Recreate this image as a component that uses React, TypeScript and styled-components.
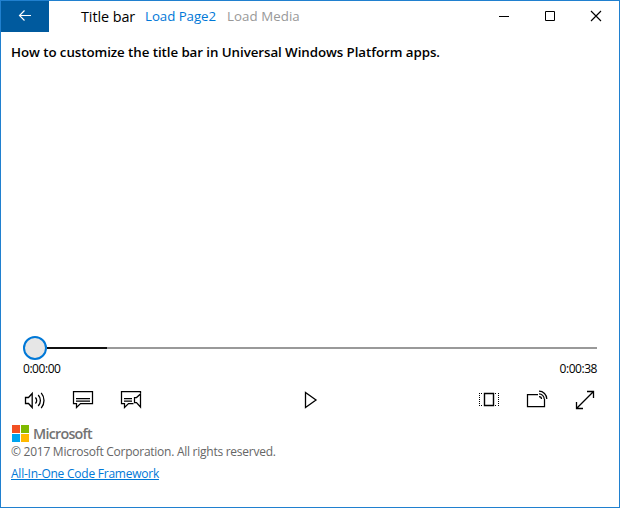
import React from "react";
import styled, { createGlobalStyle } from "styled-components";

const GlobalStyle = createGlobalStyle`
  * { box-sizing: border-box; }
  body { margin: 0; background: #fff; }
`;

const Window = styled.div`
  width: 620px;
  height: 508px;
  display: flex;
  flex-direction: column;
  border: 1px solid #2080cf;
  background: #fff;
  color: #000;
  font-family: "Open Sans", "Noto Sans", sans-serif;
  overflow: hidden;
`;

const TitleBar = styled.header`
  display: flex;
  height: 31px;
  flex: none;
`;

const BackButton = styled.button`
  width: 48px;
  height: 31px;
  padding: 0;
  border: 0;
  background: #005a9e;
`;

const TitleItems = styled.div`
  display: flex;
  flex: 1;
  padding-left: 32px;
`;

const Label = styled.span<{ $size: number; $width?: number; $color?: string; $spacing?: number }>`
  display: block;
  width: ${(p) => (p.$width ? `${p.$width}px` : "auto")};
  font-size: ${(p) => p.$size}px;
  color: ${(p) => p.$color ?? "#000"};
  letter-spacing: ${(p) => p.$spacing ?? 0}px;
  line-height: 31px;
  white-space: nowrap;
`;

const CaptionButton = styled.button`
  width: 46px;
  height: 31px;
  padding: 0;
  border: 0;
  background: transparent;
`;

const Icon = styled.svg<{ $color?: string; $weight?: number }>`
  display: block;
  margin: 0 auto;
  fill: none;
  stroke: ${(p) => p.$color ?? "#000"};
  stroke-width: ${(p) => p.$weight ?? 1};
`;

const Heading = styled.h1`
  margin: 10px 0 0 10px;
  font-size: 13.33px;
  line-height: 20px;
  font-weight: 600;
  letter-spacing: -0.07px;
  white-space: nowrap;
`;

const Stage = styled.main`
  flex: none;
  height: 274px;
`;

const Controls = styled.section`
  display: flex;
  flex-direction: column;
  height: 82px;
  padding: 0 22px;
`;

const Slider = styled.div`
  display: flex;
  align-items: center;
  height: 24px;
`;

const Thumb = styled.div`
  width: 24px;
  height: 24px;
  border: 2px solid #0078d7;
  border-radius: 50%;
  background: #e6e6e6;
`;

const Buffered = styled.div`
  width: 60px;
  height: 2px;
  background: #111;
`;

const Track = styled.div`
  flex: 1;
  height: 2px;
  background: #999;
`;

const Times = styled.div`
  display: flex;
  justify-content: space-between;
  height: 18px;
  font-size: 12px;
  line-height: 18px;
  letter-spacing: -0.45px;
`;

const Transport = styled.div`
  display: grid;
  grid-template-columns: 24px 24px 24px 1fr 24px 24px 24px;
  column-gap: 24px;
  height: 24px;
  margin-top: 10px;
`;

const IconButton = styled.button`
  width: 24px;
  height: 24px;
  padding: 0;
  border: 0;
  background: transparent;
  justify-self: center;
`;

const Footer = styled.footer`
  display: flex;
  flex-direction: column;
  align-items: flex-start;
  padding: 6px 0 0 10px;
`;

const Brand = styled.div`
  display: flex;
  height: 19px;
  padding-left: 1px;
  align-items: center;
  gap: 4px;
`;

const Logo = styled.svg`
  display: block;
`;

const Wordmark = styled.span`
  font-size: 14.3px;
  font-weight: 600;
  line-height: 19px;
  letter-spacing: -0.75px;
  color: #737373;
`;

const Copyright = styled.p`
  margin: 0;
  font-size: 12px;
  line-height: 17px;
  letter-spacing: -0.26px;
  color: #666;
  white-space: nowrap;
`;

const Link = styled.a`
  margin-top: 6px;
  font-size: 12px;
  line-height: 16px;
  letter-spacing: -0.24px;
  color: #0078d7;
  text-decoration: underline;
  text-underline-offset: 1px;
`;

export default function App() {
  return (
    <Window>
      <GlobalStyle />
      <TitleBar>
        <BackButton aria-label="Back">
          <Icon width="48" height="31" $color="#fff" $weight={1.15}>
            <path d="M30 14.5H18.5M23.5 9.5l-5 5 5 5" />
          </Icon>
        </BackButton>
        <TitleItems>
          <Label $size={14.4} $width={64} $spacing={-0.08}>Title bar</Label>
          <Label $size={13.3} $width={82} $color="#0078d7" $spacing={-0.05}>Load Page2</Label>
          <Label $size={13.3} $color="#999" $spacing={0.05}>Load Media</Label>
        </TitleItems>
        <CaptionButton aria-label="Minimize">
          <Icon width="46" height="31"><path d="M18 15.5h10" /></Icon>
        </CaptionButton>
        <CaptionButton aria-label="Maximize">
          <Icon width="46" height="31"><path d="M18.5 10.5h9v9h-9z" /></Icon>
        </CaptionButton>
        <CaptionButton aria-label="Close">
          <Icon width="46" height="31" $weight={1.15}><path d="M18 10l10 10M28 10L18 20" /></Icon>
        </CaptionButton>
      </TitleBar>
      <Heading>How to customize the title bar in Universal Windows Platform apps.</Heading>
      <Stage />
      <Controls>
        <Slider>
          <Thumb />
          <Buffered />
          <Track />
        </Slider>
        <Times>
          <span>0:00:00</span>
          <span>0:00:38</span>
        </Times>
        <Transport>
          <IconButton aria-label="Volume">
            <Icon width="24" height="24" $weight={1.3}>
              <path d="M2.5 9.5h3l3.700-4v14l-3.700-4h-3z" />
              <path d="M12.400 9.500a4.200 4.200 0 0 1 0 6M15.200 7a8 8 0 0 1 0 11M18.200 4.800a12 12 0 0 1 0 15.400" />
            </Icon>
          </IconButton>
          <IconButton aria-label="Subtitles">
            <Icon width="24" height="24" $weight={1.25}>
              <path d="M2.500 3.500h19v12H9.500L5.500 19.500v-4h-3zM5 10.500h14M5 13h14" />
            </Icon>
          </IconButton>
          <IconButton aria-label="Audio description">
            <Icon width="24" height="24" $weight={1.25}>
              <path d="M21.500 5V3.500h-19v12h3v4l4-4h5M5 10.500h8M5 13h8" />
              <path d="M15.500 9.500h2l4-3.500v13l-4-4.500h-2z" />
            </Icon>
          </IconButton>
          <IconButton aria-label="Play">
            <Icon width="24" height="24" $weight={1.3}><path d="M7.500 4.500v15L18 12z" /></Icon>
          </IconButton>
          <IconButton aria-label="Aspect ratio">
            <Icon width="24" height="24">
              <path d="M7.500 5.500h9v12h-9z" strokeWidth="1.4" />
              <path d="M2.500 5v14M21.500 5v14M4 5.500h2M4 17.500h2M18 5.500h2M18 17.500h2" strokeDasharray="1 1" />
            </Icon>
          </IconButton>
          <IconButton aria-label="Cast to device">
            <Icon width="24" height="24" $weight={1.25}>
              <path d="M13 6.500H2.500v12h17V11" />
              <path d="M14 8.500a2.500 2.500 0 0 1 2.500 2.500M14 5.800a5.200 5.200 0 0 1 5.200 5.200M14 3.200a7.800 7.800 0 0 1 7.800 7.800" />
            </Icon>
          </IconButton>
          <IconButton aria-label="Full screen">
            <Icon width="24" height="24" $weight={1.3}>
              <path d="M3.500 20.500L20.500 3.500M14 3.500h6.500V10M3.500 14v6.500H10" />
            </Icon>
          </IconButton>
        </Transport>
      </Controls>
      <Footer>
        <Brand>
          <Logo width="17" height="17">
            <path fill="#f25022" d="M0 0h8v8H0z" />
            <path fill="#7fba00" d="M9 0h8v8H9z" />
            <path fill="#00a4ef" d="M0 9h8v8H0z" />
            <path fill="#ffb900" d="M9 9h8v8H9z" />
          </Logo>
          <Wordmark>Microsoft</Wordmark>
        </Brand>
        <Copyright>© 2017 Microsoft Corporation. All rights reserved.</Copyright>
        <Link>All-In-One Code Framework</Link>
      </Footer>
    </Window>
  );
}
